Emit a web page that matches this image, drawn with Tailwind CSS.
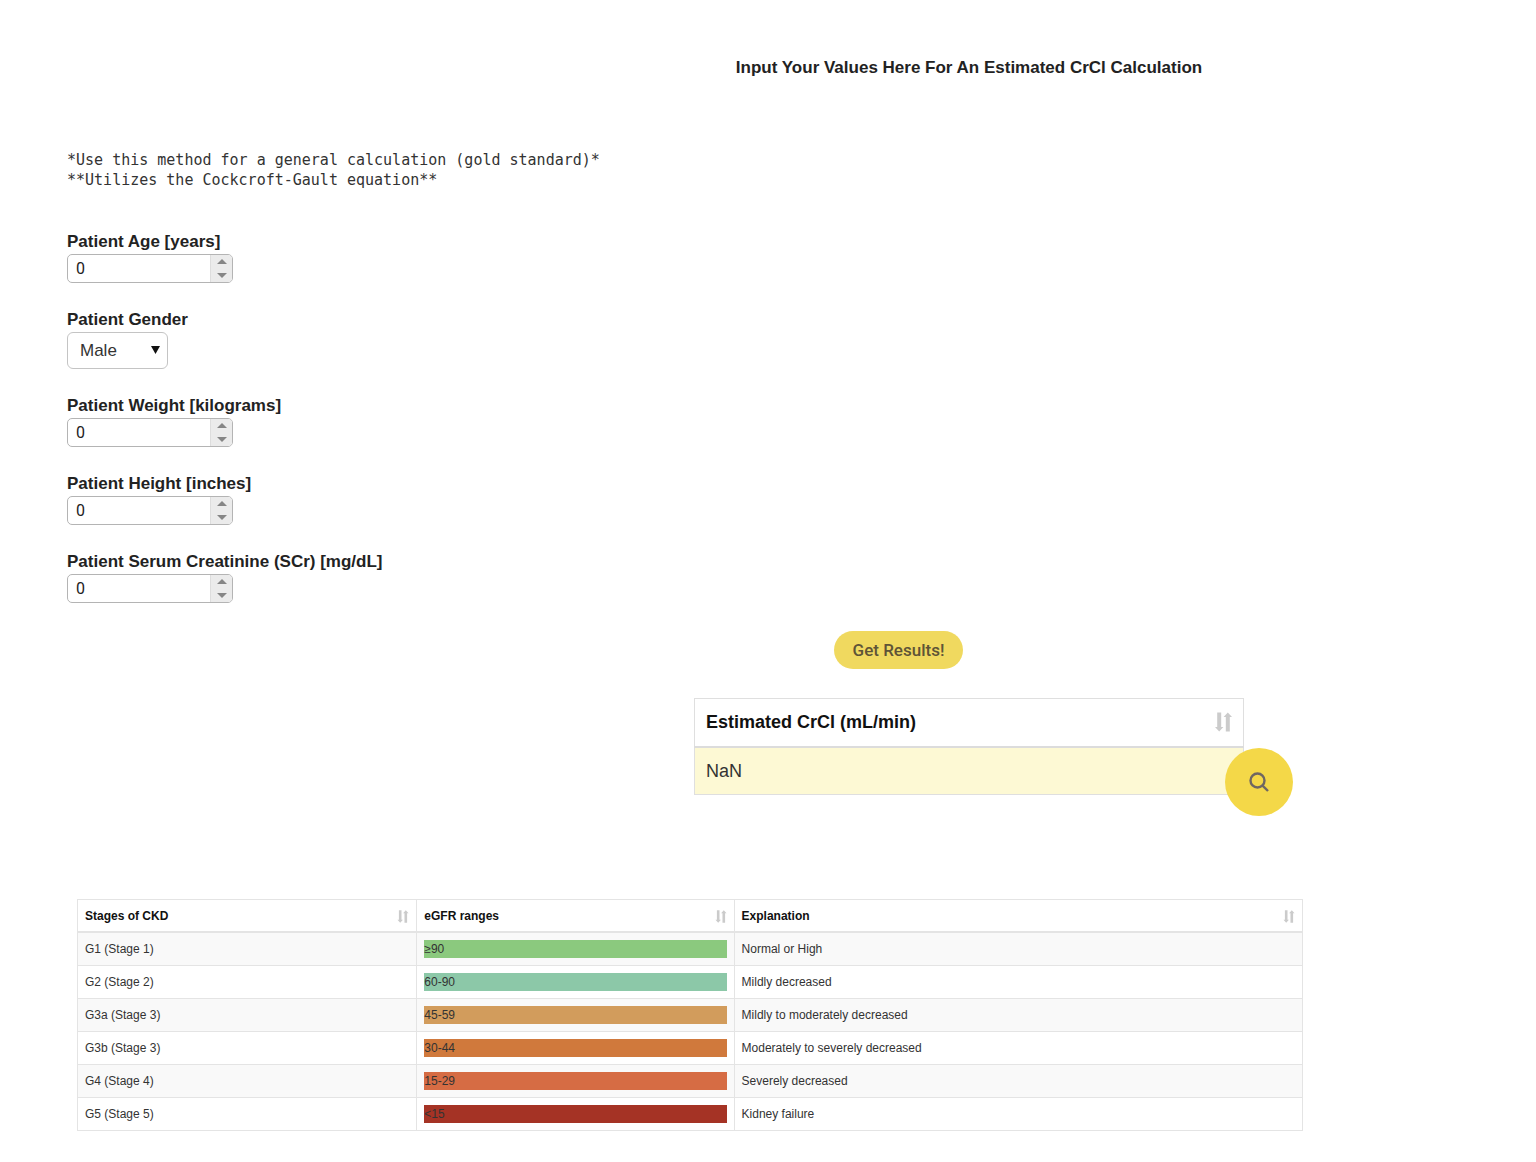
<!DOCTYPE html>
<html lang="en">
<head>
<meta charset="utf-8">
<meta name="viewport" content="width=device-width, initial-scale=1">
<title>Estimated CrCl Calculation</title>
<script src="https://cdn.jsdelivr.net/npm/@tailwindcss/browser@4"></script>
</head>
<body class="bg-white font-['Liberation_Sans',Arial,sans-serif] text-[17px] leading-6 text-[#222]">
<svg class="hidden" aria-hidden="true">
  <symbol id="sort" viewBox="0 0 17 20">
    <path d="M2.200 0.500h4v14.500h2.200L4.200 19.500 0 15h2.200zM10.800 19.500V5H8.600L12.800 0.500 17 5h-2.200v14.500z" fill="#cbcbcb"/>
  </symbol>
  <symbol id="up" viewBox="0 0 10 5"><path d="M0 5L5 0l5 5z" fill="#858585"/></symbol>
  <symbol id="down" viewBox="0 0 10 5"><path d="M0 0h10L5 5z" fill="#858585"/></symbol>
</svg>

<header class="grid grid-cols-[694fr_550fr_292fr] pt-14">
  <h1 class="col-start-2 text-center font-bold whitespace-nowrap">Input Your Values Here For An Estimated CrCl Calculation</h1>
</header>

<main>
  <form>
    <div class="flex flex-col items-start px-[67px] pt-[70px]">
      <pre class="font-['DejaVu_Sans_Mono',monospace] text-[15px] leading-5 text-[#333]">*Use this method for a general calculation (gold standard)*
**Utilizes the Cockcroft-Gault equation**</pre>

      <div class="mt-10 flex flex-col items-start gap-[25px]">
        <div class="flex flex-col items-start">
          <label for="age" class="font-bold">Patient Age [years]</label>
          <div class="flex h-[29px] w-[166px] overflow-hidden rounded-[5px] border border-[#b4b4b4] bg-white">
            <input id="age" type="number" value="0" class="w-0 flex-1 appearance-none px-2 font-[Roboto,sans-serif] text-base leading-6 outline-none [-moz-appearance:textfield] [&::-webkit-inner-spin-button]:appearance-none">
            <div class="flex w-[22px] flex-col border-l border-[#ddd] bg-[#ebebeb]">
              <button type="button" aria-label="Increase age" class="flex flex-1 items-center justify-center"><svg class="h-[5px] w-[10px]"><use href="#up"/></svg></button>
              <button type="button" aria-label="Decrease age" class="flex flex-1 items-center justify-center"><svg class="h-[5px] w-[10px]"><use href="#down"/></svg></button>
            </div>
          </div>
        </div>

        <div class="flex flex-col items-start">
          <label for="gender" class="font-bold">Patient Gender</label>
          <div class="relative">
            <select id="gender" class="h-[37px] w-[101px] appearance-none rounded-md border border-[#c4c4c4] bg-white px-3 text-[17px] text-[#333]">
              <option>Male</option>
              <option>Female</option>
            </select>
            <svg class="pointer-events-none absolute top-[14px] right-2 h-2 w-[9px]" viewBox="0 0 9 8"><path d="M0 0h9L4.500 8z" fill="#111"/></svg>
          </div>
        </div>

        <div class="flex flex-col items-start">
          <label for="weight" class="font-bold">Patient Weight [kilograms]</label>
          <div class="flex h-[29px] w-[166px] overflow-hidden rounded-[5px] border border-[#b4b4b4] bg-white">
            <input id="weight" type="number" value="0" class="w-0 flex-1 appearance-none px-2 font-[Roboto,sans-serif] text-base leading-6 outline-none [-moz-appearance:textfield] [&::-webkit-inner-spin-button]:appearance-none">
            <div class="flex w-[22px] flex-col border-l border-[#ddd] bg-[#ebebeb]">
              <button type="button" aria-label="Increase weight" class="flex flex-1 items-center justify-center"><svg class="h-[5px] w-[10px]"><use href="#up"/></svg></button>
              <button type="button" aria-label="Decrease weight" class="flex flex-1 items-center justify-center"><svg class="h-[5px] w-[10px]"><use href="#down"/></svg></button>
            </div>
          </div>
        </div>

        <div class="flex flex-col items-start">
          <label for="height" class="font-bold">Patient Height [inches]</label>
          <div class="flex h-[29px] w-[166px] overflow-hidden rounded-[5px] border border-[#b4b4b4] bg-white">
            <input id="height" type="number" value="0" class="w-0 flex-1 appearance-none px-2 font-[Roboto,sans-serif] text-base leading-6 outline-none [-moz-appearance:textfield] [&::-webkit-inner-spin-button]:appearance-none">
            <div class="flex w-[22px] flex-col border-l border-[#ddd] bg-[#ebebeb]">
              <button type="button" aria-label="Increase height" class="flex flex-1 items-center justify-center"><svg class="h-[5px] w-[10px]"><use href="#up"/></svg></button>
              <button type="button" aria-label="Decrease height" class="flex flex-1 items-center justify-center"><svg class="h-[5px] w-[10px]"><use href="#down"/></svg></button>
            </div>
          </div>
        </div>

        <div class="flex flex-col items-start">
          <label for="scr" class="font-bold">Patient Serum Creatinine (SCr) [mg/dL]</label>
          <div class="flex h-[29px] w-[166px] overflow-hidden rounded-[5px] border border-[#b4b4b4] bg-white">
            <input id="scr" type="number" value="0" class="w-0 flex-1 appearance-none px-2 font-[Roboto,sans-serif] text-base leading-6 outline-none [-moz-appearance:textfield] [&::-webkit-inner-spin-button]:appearance-none">
            <div class="flex w-[22px] flex-col border-l border-[#ddd] bg-[#ebebeb]">
              <button type="button" aria-label="Increase serum creatinine" class="flex flex-1 items-center justify-center"><svg class="h-[5px] w-[10px]"><use href="#up"/></svg></button>
              <button type="button" aria-label="Decrease serum creatinine" class="flex flex-1 items-center justify-center"><svg class="h-[5px] w-[10px]"><use href="#down"/></svg></button>
            </div>
          </div>
        </div>
      </div>
    </div>

    <div class="grid grid-cols-[694fr_550fr_292fr] pt-7">
      <div class="col-start-2 flex pl-[140px]">
        <button type="button" class="h-[38px] w-[129px] rounded-full bg-[#f0d95f] font-[Roboto,sans-serif] text-[17px] font-medium whitespace-nowrap text-[#5e5437]">Get Results!</button>
      </div>
    </div>
  </form>

  <section class="grid grid-cols-[694fr_550fr_292fr] pt-[29px]">
    <div class="relative col-start-2">
      <table class="w-full border-collapse border border-[#dfdfdf] text-lg leading-6">
        <thead>
          <tr class="h-12"><th class="border-b-2 border-[#dcdcdc] px-[11px] text-left font-bold text-[#111]">
            <div class="flex items-center justify-between">Estimated CrCl (mL/min)<svg class="h-5 w-[17px]"><use href="#sort"/></svg></div>
          </th></tr>
        </thead>
        <tbody><tr class="h-12 bg-[#fdf9d4]"><td class="px-[11px] text-[#333]">NaN</td></tr></tbody>
      </table>
      <button type="button" aria-label="Search" class="absolute top-[50px] -right-[49px] flex size-[68px] items-center justify-center rounded-full bg-[#f4d848]">
        <svg class="size-5" viewBox="0 0 20 20" fill="none" stroke="#6f6762" stroke-width="2.400"><circle cx="8.500" cy="8.500" r="7"/><path d="M13.300 13.300L19 19"/></svg>
      </button>
    </div>
  </section>

  <section class="grid grid-cols-[77fr_1226fr_233fr] pt-[104px] pb-[30px]">
    <table class="col-start-2 w-full table-fixed border-collapse border border-[#e4e4e4] text-xs leading-[18px] text-[#333] [&_td]:border [&_td]:border-[#e4e4e4] [&_td]:px-[7px] [&_td]:py-[7px] [&_th]:border [&_th]:border-b-2 [&_th]:border-[#e4e4e4] [&_th]:px-[7px] [&_th]:pt-[7px] [&_th]:pb-[6px] [&_th]:text-left [&_th]:text-[#111]">
      <colgroup><col class="w-[27.7%]"><col class="w-[25.900%]"><col></colgroup>
      <thead>
        <tr>
          <th><div class="flex items-center justify-between">Stages of CKD<svg class="h-[13px] w-3"><use href="#sort"/></svg></div></th>
          <th><div class="flex items-center justify-between">eGFR ranges<svg class="h-[13px] w-3"><use href="#sort"/></svg></div></th>
          <th><div class="flex items-center justify-between">Explanation<svg class="h-[13px] w-3"><use href="#sort"/></svg></div></th>
        </tr>
      </thead>
      <tbody>
        <tr class="bg-[#f9f9f9]"><td>G1 (Stage 1)</td><td><div class="bg-[#8bc97e]">≥90</div></td><td>Normal or High</td></tr>
        <tr><td>G2 (Stage 2)</td><td><div class="bg-[#8cc8a8]">60-90</div></td><td>Mildly decreased</td></tr>
        <tr class="bg-[#f9f9f9]"><td>G3a (Stage 3)</td><td><div class="bg-[#d29c5c]">45-59</div></td><td>Mildly to moderately decreased</td></tr>
        <tr><td>G3b (Stage 3)</td><td><div class="bg-[#d0793c]">30-44</div></td><td>Moderately to severely decreased</td></tr>
        <tr class="bg-[#f9f9f9]"><td>G4 (Stage 4)</td><td><div class="bg-[#d66c44]">15-29</div></td><td>Severely decreased</td></tr>
        <tr><td>G5 (Stage 5)</td><td><div class="bg-[#a53325]">&lt;15</div></td><td>Kidney failure</td></tr>
      </tbody>
    </table>
  </section>
</main>
</body>
</html>
